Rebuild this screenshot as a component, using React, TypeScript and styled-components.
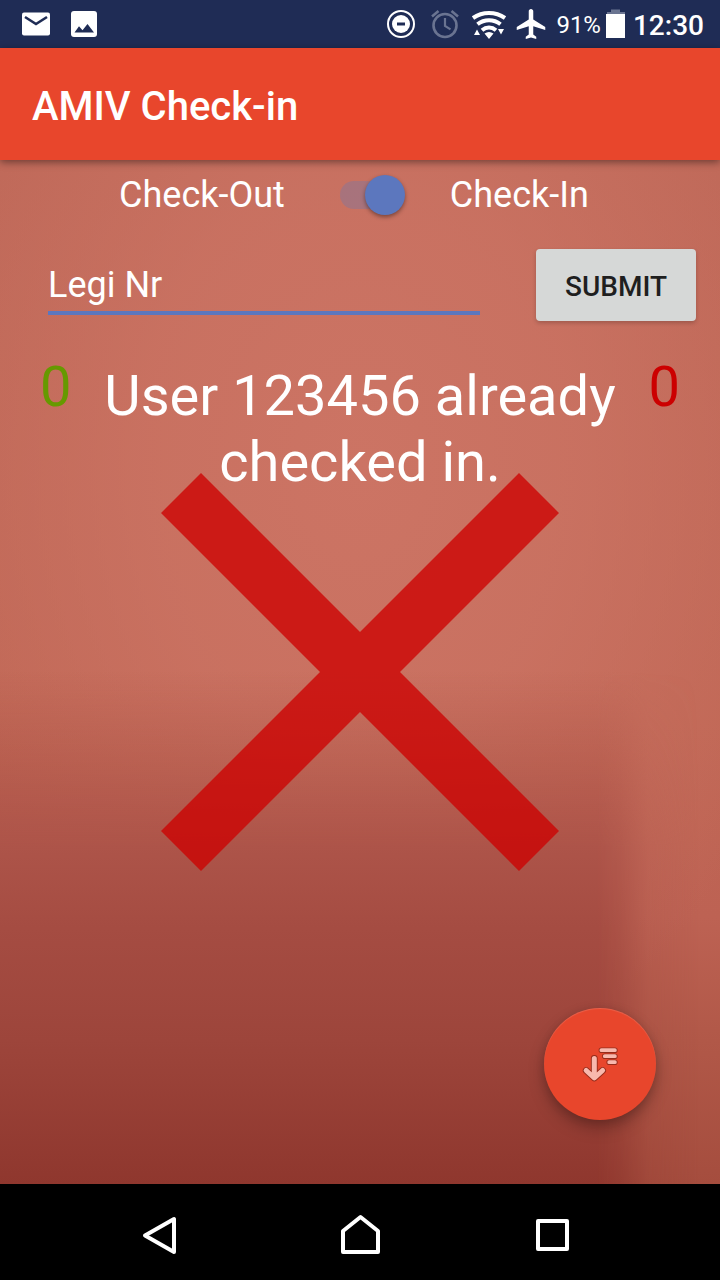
import React, { useState } from "react";
import styled, { createGlobalStyle } from "styled-components";

const GlobalStyle = createGlobalStyle`
  *, *::before, *::after { box-sizing: border-box; }
  body {
    margin: 0;
    background: #000;
    color: #fff;
    font-family: Roboto, "Liberation Sans", sans-serif;
  }
  button, input { font-family: inherit; }
`;

const Screen = styled.div`
  display: flex;
  flex-direction: column;
  min-height: 100vh;
`;

const StatusBar = styled.div`
  display: flex;
  align-items: center;
  height: 48px;
  padding: 0 16px;
  background: #1f2c55;
`;

const StatusGroup = styled.div<{ $end?: boolean }>`
  display: flex;
  align-items: center;
  margin-left: ${(p) => (p.$end ? "auto" : "0")};
`;

const Icon = styled.svg`
  display: block;
  flex: none;
`;

const Battery = styled.span`
  margin-left: 4px;
  padding-top: 2px;
  font-size: 24px;
  line-height: 46px;
`;

const Clock = styled.time`
  margin-left: 4px;
  padding-top: 4px;
  font-size: 28px;
  font-weight: 500;
  line-height: 44px;
`;

const AppBar = styled.header`
  position: relative;
  z-index: 1;
  display: flex;
  align-items: center;
  height: 112px;
  padding: 6px 32px 0;
  background: #e8462c;
  box-shadow: 0 2px 8px rgba(0, 0, 0, 0.45);
`;

const Title = styled.h1`
  margin: 0;
  font-size: 40px;
  font-weight: 500;
  line-height: 48px;
`;

const Preview = styled.main`
  position: relative;
  isolation: isolate;
  flex: 1;
  display: flex;
  flex-direction: column;
  overflow: hidden;
  background:
    radial-gradient(ellipse 66% 62% at 50% 30%, rgba(204, 116, 100, 1), rgba(204, 116, 100, 0.75) 45%, rgba(204, 116, 100, 0) 100%),
    linear-gradient(#be6858, #c06755 55%, #bd6253 74%, #b15848 86%, #a54d3e);

  &::before {
    content: "";
    position: absolute;
    z-index: -1;
    inset: 0;
    background: linear-gradient(
      rgba(176, 84, 70, 0) 50%,
      rgba(174, 84, 71, 0.5) 59%,
      #ad5449 67%,
      #a54c42 75%,
      #9d453b 86%,
      #8f372e
    );
    mask-image: linear-gradient(90deg, #000 83%, rgba(0, 0, 0, 0.75) 86%, rgba(0, 0, 0, 0.2) 90%, transparent 97%);
  }
`;

const ModeRow = styled.div`
  display: flex;
  justify-content: center;
  align-items: center;
  gap: 45px;
  height: 70px;
  padding-right: 12px;
`;

const ModeLabel = styled.label`
  font-size: 36px;
  line-height: 42px;
`;

const Switch = styled.input`
  appearance: none;
  position: relative;
  width: 75px;
  height: 40px;
  margin: 0;
  cursor: pointer;

  &::before {
    content: "";
    position: absolute;
    top: 6px;
    right: 8px;
    width: 57px;
    height: 28px;
    border-radius: 14px;
    background: rgba(92, 119, 190, 0.3);
  }

  &::after {
    content: "";
    position: absolute;
    top: 0;
    right: 0;
    width: 40px;
    height: 40px;
    border-radius: 50%;
    background: #5c77be;
    box-shadow: 0 2px 4px rgba(0, 0, 0, 0.4);
  }

  &:not(:checked)::after {
    right: 35px;
    background: #ececec;
  }
`;

const EntryForm = styled.form`
  display: flex;
  gap: 56px;
  padding: 19px 24px 0 48px;
`;

const LegiInput = styled.input`
  flex: 1;
  min-width: 0;
  height: 66px;
  padding: 10px 0 0;
  border: 0;
  border-bottom: 4px solid #5c77be;
  outline: 0;
  background: none;
  color: #fff;
  font-size: 36px;

  &::placeholder {
    color: #fff;
    opacity: 1;
  }
`;

const SubmitButton = styled.button`
  width: 160px;
  height: 72px;
  padding: 2px 0 0;
  border: 0;
  border-radius: 4px;
  background: #d6d8d7;
  box-shadow: 0 2px 4px rgba(0, 0, 0, 0.2);
  color: #1f1f1f;
  font-size: 28px;
  font-weight: 500;
`;

const ResultRow = styled.div`
  display: flex;
  align-items: flex-start;
  gap: 24px;
  padding: 33px 40px 0;
  font-size: 56px;
  line-height: 66px;
`;

const Count = styled.output<{ $color: string }>`
  color: ${(p) => p.$color};
`;

const Message = styled.p`
  flex: 1;
  margin: 0;
  padding-top: 9px;
  text-align: center;
`;

const Cross = styled.svg`
  position: absolute;
  z-index: -1;
  inset: 0;
  width: 400px;
  height: 400px;
  margin: auto;
`;

const Fab = styled.button`
  position: absolute;
  right: 64px;
  bottom: 64px;
  display: grid;
  place-items: center;
  width: 112px;
  height: 112px;
  padding: 0;
  border: 0;
  border-radius: 50%;
  background: #e8462c;
  box-shadow:
    inset 0 1px 1px rgba(255, 255, 255, 0.15),
    0 8px 16px rgba(0, 0, 0, 0.25),
    0 2px 8px rgba(0, 0, 0, 0.12);
`;

const NavBar = styled.nav`
  display: flex;
  justify-content: center;
  height: 96px;
  background: #000;
`;

const NavButton = styled.button`
  display: grid;
  place-items: center;
  width: 192px;
  padding: 0;
  border: 0;
  background: none;
`;

const NavIcon = ({ d }: { d: string }) => (
  <Icon width="64" height="64" viewBox="0 0 64 64" fill="none" stroke="#fff" strokeWidth="4" strokeLinejoin="round" aria-hidden>
    <path d={d} />
  </Icon>
);

const MailIcon = () => (
  <Icon width="40" height="48" viewBox="0 0 40 48" aria-hidden>
    <rect x="6" y="12.500" width="28" height="23" rx="2" fill="#fff" />
    <path d="M9 17l11 7 11-7" fill="none" stroke="#1f2c55" strokeWidth="2.6" />
  </Icon>
);

const PictureIcon = () => (
  <Icon width="56" height="48" viewBox="0 0 56 48" aria-hidden>
    <rect x="15" y="11" width="26" height="26" rx="3" fill="#fff" />
    <path d="M18.500 32.500l4.500-6.200 3.500 4 5-6.300 6.500 8.500z" fill="#1f2c55" />
  </Icon>
);

const DoNotDisturbIcon = () => (
  <Icon width="44" height="48" viewBox="0 0 44 48" aria-hidden>
    <circle cx="21" cy="24" r="13" fill="none" stroke="#fff" strokeWidth="2" />
    <circle cx="21" cy="24" r="9" fill="#fff" />
    <path d="M17 24h8" stroke="#1f2c55" strokeWidth="3" />
  </Icon>
);

const AlarmIcon = () => (
  <Icon width="44" height="48" viewBox="0 0 44 48" fill="none" stroke="#6a7491" strokeWidth="2.6" aria-hidden>
    <circle cx="21" cy="25.500" r="11.500" />
    <path d="M21 18v8l5.500 3.400" strokeWidth="2.200" />
    <path d="M8 16.500l6.500-5.500M34 16.500L27.500 11" />
  </Icon>
);

const WifiIcon = () => (
  <Icon width="44" height="48" viewBox="0 0 44 48" aria-hidden>
    <g fill="none" stroke="#fff" strokeWidth="4">
      <path d="M5 18c9.500-6.800 22.500-6.800 32 0" />
      <path d="M9.500 24.200c6.800-5.400 16.200-5.400 23 0" />
      <path d="M14 30.300c4.200-3.600 9.800-3.600 14 0" />
    </g>
    <path d="M16.500 33.500c3-2 6-2 9 0L21 39zM6 35l3-5.500 3 5.500zM30 29h6l-3 5.500z" fill="#fff" />
  </Icon>
);

const AirplaneIcon = () => (
  <Icon width="40" height="48" viewBox="0 0 40 48" aria-hidden>
    <path
      transform="translate(1.750 6) scale(1.5)"
      d="M21 16v-2l-8-5V3.500c0-.83-.67-1.500-1.500-1.500S10 2.670 10 3.500V9l-8 5v2l8-2.500V19l-2 1.500V22l3.500-1 3.500 1v-1.500L13 19v-5.500l8 2.500z"
      fill="#fff"
    />
  </Icon>
);

const BatteryIcon = () => (
  <Icon width="28" height="48" viewBox="0 0 28 48" aria-hidden>
    <path d="M10 9.500h9V12H24v3h-18v-3h4z" fill="#6a7491" />
    <path d="M5 14h19v24h-19z" fill="#fff" />
  </Icon>
);

const SortIcon = () => (
  <Icon width="48" height="48" viewBox="0 0 48 48" fill="none" strokeLinecap="round" strokeLinejoin="round" aria-hidden>
    {[
      { color: "#962c1b", width: 5.6 },
      { color: "#f8b8ad", width: 3.8 },
    ].map((s) => (
      <g key={s.color} stroke={s.color} strokeWidth={s.width}>
        <path d="M18.300 18.500v18M10.200 30.500l8.100 7.500 8.300-7.500" strokeWidth={s.width + 1.2} />
        <path d="M25.400 10.200h13.500M28.800 16.200h10.100M33.200 22.200h5.700" />
      </g>
    ))}
  </Icon>
);

export default function App() {
  const [checkIn, setCheckIn] = useState(true);
  const [legi, setLegi] = useState("");

  return (
    <>
      <GlobalStyle />
      <Screen>
        <StatusBar>
          <StatusGroup>
            <MailIcon />
            <PictureIcon />
          </StatusGroup>
          <StatusGroup $end>
            <DoNotDisturbIcon />
            <AlarmIcon />
            <WifiIcon />
            <AirplaneIcon />
            <Battery>91%</Battery>
            <BatteryIcon />
            <Clock>12:30</Clock>
          </StatusGroup>
        </StatusBar>

        <AppBar>
          <Title>AMIV Check-in</Title>
        </AppBar>

        <Preview>
          <ModeRow>
            <ModeLabel htmlFor="mode">Check-Out</ModeLabel>
            <Switch id="mode" type="checkbox" role="switch" checked={checkIn} onChange={(e) => setCheckIn(e.target.checked)} />
            <ModeLabel htmlFor="mode">Check-In</ModeLabel>
          </ModeRow>

          <EntryForm onSubmit={(e) => e.preventDefault()}>
            <LegiInput aria-label="Legi Nr" placeholder="Legi Nr" value={legi} onChange={(e) => setLegi(e.target.value)} />
            <SubmitButton type="submit">SUBMIT</SubmitButton>
          </EntryForm>

          <ResultRow>
            <Count $color="#669900">0</Count>
            <Message>User 123456 already checked in.</Message>
            <Count $color="#cc0000">0</Count>
          </ResultRow>

          <Cross viewBox="0 0 400 400" aria-hidden>
            <path
              d="M1 41L41 1l159 159L359 1l40 40-159 159 159 159-40 40-159-159L41 399 1 359l159-159z"
              fill="#cc0000"
              fillOpacity="0.77"
            />
          </Cross>

          <Fab type="button" aria-label="Member list">
            <SortIcon />
          </Fab>
        </Preview>

        <NavBar>
          <NavButton type="button" aria-label="Back">
            <NavIcon d="M38 19v33L9 35.500z" />
          </NavButton>
          <NavButton type="button" aria-label="Home">
            <NavIcon d="M15 52V31l17.500-14L50 31v21z" />
          </NavButton>
          <NavButton type="button" aria-label="Overview">
            <NavIcon d="M18 21h29v28H18z" />
          </NavButton>
        </NavBar>
      </Screen>
    </>
  );
}
